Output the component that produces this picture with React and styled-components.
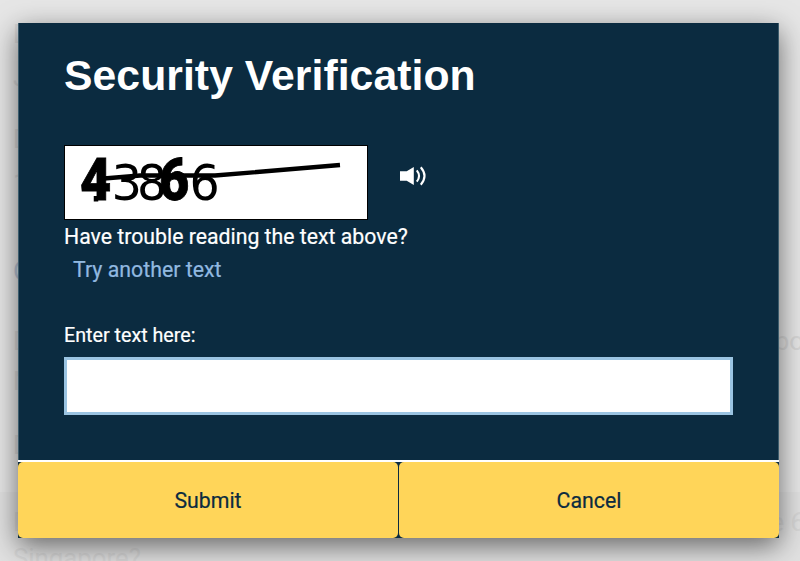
import React from "react";
import styled, { createGlobalStyle } from "styled-components";

const GlobalStyle = createGlobalStyle`
  *, *::before, *::after { box-sizing: border-box; }
  html, body { margin: 0; padding: 0; overflow: hidden; }
  body { font-family: Roboto, "Liberation Sans", sans-serif; }
`;

const Screen = styled.div`
  display: grid;
  width: 800px;
  height: 561px;
  overflow: hidden;
  background: #e4e4e4;
  > * { grid-area: 1 / 1; }
`;

const Backdrop = styled.div`
  display: flex;
  flex-direction: column;
  height: 561px;
  overflow: hidden;
  color: #d7d7d7;
  font-size: 25.8px;
  line-height: 28px;
  background: linear-gradient(#e6e6e6 0 492px, #e1e1e1 492px 100%);
`;

const BackRow = styled.div`
  display: flex;
  justify-content: space-between;
  flex: none;
  height: ${(p) => p.$height}px;
  margin-right: ${(p) => (p.$bleed ? -p.$bleed : 0)}px;
  padding-left: 13px;
  color: ${(p) => p.$color || "inherit"};
  white-space: nowrap;
`;

const Dialog = styled.section`
  z-index: 1;
  display: flex;
  flex-direction: column;
  width: 761px;
  height: 515px;
  margin: 23px 0 0 18px;
  background: #0b2b40;
  box-shadow: 0 8px 26px rgba(0, 0, 0, 0.55);
`;

const Content = styled.div`
  display: flex;
  flex-direction: column;
  align-items: flex-start;
  height: 437px;
  padding: 29px 46px 0;
  border: solid #3c5c6c;
  border-width: 0 1px;
  color: #fff;
`;

const Title = styled.h1`
  margin: 0 0 0 -1px;
  height: 93px;
  font: bold 42.7px/46px "Liberation Sans", Arial, sans-serif;
  letter-spacing: 0.06px;
  white-space: nowrap;
`;

const CaptchaRow = styled.div`
  display: flex;
  align-items: center;
  gap: 32px;
  height: 75px;
  margin-left: -1px;
`;

const CaptchaFrame = styled.div`
  width: 304px;
  height: 75px;
  border: 1px solid #000;
  background: #fff;
  svg { display: block; }
`;

const AudioButton = styled.button`
  display: flex;
  padding: 0;
  margin-top: -13px;
  border: 0;
  background: none;
  color: #fff;
`;

const Line = styled.p`
  margin: 0 0 0 ${(p) => p.$indent || -1}px;
  height: ${(p) => p.$height}px;
  font-size: ${(p) => p.$size}px;
  line-height: ${(p) => p.$leading || 34}px;
  color: ${(p) => p.$color || "#fff"};
  -webkit-text-stroke: 0.2px currentColor;
  white-space: nowrap;
`;

const CodeInput = styled.input`
  width: 669px;
  height: 58px;
  margin-left: -1px;
  padding: 0 12px;
  border: 3px solid #9bc4e2;
  border-radius: 0;
  outline: 0;
  background: #fff;
  font: 22px Roboto, sans-serif;
`;

const Actions = styled.div`
  display: grid;
  grid-template-columns: 380px 380px;
  column-gap: 1px;
  height: 78px;
  border-top: 2px solid #fff;
`;

const ActionButton = styled.button`
  padding: 2px 0 0;
  border: 0;
  border-radius: 5px;
  background: #ffd559;
  color: #0b2b40;
  font: 21.3px/74px Roboto, sans-serif;
  -webkit-text-stroke: 0.2px currentColor;
`;

const backRows = [
  { left: "Disclosure of your personal information", height: 43 },
  { left: "J", height: 62 },
  { left: "D", height: 44 },
  { left: "1", height: 88 },
  { left: "O", height: 70, color: "#b8c4d4" },
  { left: "D", right: "po", bleed: 4, height: 40 },
  { left: "N", height: 64 },
  { left: "D", height: 77 },
  { left: "D", right: "e 6", bleed: 5, height: 36 },
  { left: "Singapore?", height: 30 },
];

const glyphs = [
  { char: "4", x: 15, y: 54, scale: 0.9, size: 60, font: "Roboto", weight: 900, stroke: 0.8 },
  { char: "3", x: 46.5, y: 53.5, scale: 0.98, size: 49, font: "DejaVu Sans", weight: 400, stroke: 0 },
  { char: "8", x: 72, y: 53.5, scale: 0.96, size: 49, font: "DejaVu Sans", weight: 400, stroke: 0 },
  { char: "6", x: 94, y: 53.5, scale: 0.87, size: 60, font: "Roboto", weight: 900, stroke: 0.8 },
  { char: "6", x: 124.5, y: 53.5, scale: 0.97, size: 49, font: "DejaVu Sans", weight: 400, stroke: 0 },
];

function CaptchaImage() {
  return (
    <svg width="302" height="73" viewBox="0 0 302 73">
      {glyphs.map((g, i) => (
        <text
          key={i}
          transform={`translate(${g.x} ${g.y}) scale(${g.scale} 1)`}
          fontFamily={g.font}
          fontSize={g.size}
          fontWeight={g.weight}
          stroke="#000"
          strokeWidth={g.stroke}
        >
          {g.char}
        </text>
      ))}
      <path d="M31 50V55.5" fill="none" stroke="#000" strokeWidth="4.5" />
      <path d="M39 32.5L75 29.5H150L275 19" fill="none" stroke="#000" strokeWidth="4.3" />
    </svg>
  );
}

function SpeakerIcon() {
  return (
    <svg width="27" height="20" viewBox="0 0 27 20">
      <path d="M0 5.2H6.7L13.8 1V19L6.7 14.8H0Z" fill="currentColor" />
      <path d="M16.8 4.3Q21.3 10 16.8 15.7M20.8 1.3Q28.2 10 20.8 18.7" fill="none" stroke="currentColor" strokeWidth="2.1" />
    </svg>
  );
}

export default function App() {
  return (
    <>
      <GlobalStyle />
      <Screen>
        <Backdrop aria-hidden="true">
          <BackRow $height={20} />
          {backRows.map((r, i) => (
            <BackRow key={i} $height={r.height} $color={r.color} $bleed={r.bleed}>
              <span>{r.left}</span>
              {r.right && <span>{r.right}</span>}
            </BackRow>
          ))}
        </Backdrop>
        <Dialog role="dialog" aria-label="Security Verification">
          <Content>
            <Title>Security Verification</Title>
            <CaptchaRow>
              <CaptchaFrame><CaptchaImage /></CaptchaFrame>
              <AudioButton aria-label="Play audio"><SpeakerIcon /></AudioButton>
            </CaptchaRow>
            <Line $size={21.25} $height={33} $leading={33}>Have trouble reading the text above?</Line>
            <Line $size={21.3} $height={67} $indent={8} $color="#91b9e0">Try another text</Line>
            <Line $size={19.7} $height={37} $leading={32}>Enter text here:</Line>
            <CodeInput aria-label="Enter text here" />
          </Content>
          <Actions>
            <ActionButton>Submit</ActionButton>
            <ActionButton>Cancel</ActionButton>
          </Actions>
        </Dialog>
      </Screen>
    </>
  );
}
